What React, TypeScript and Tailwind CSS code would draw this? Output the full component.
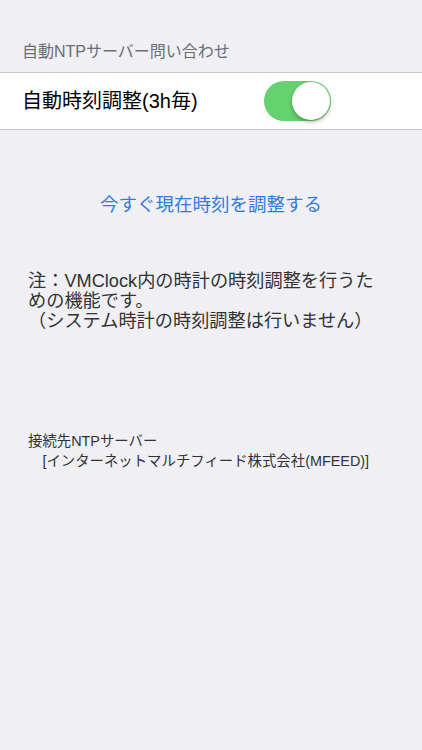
export default function App() {
  const font = { fontFamily: '"Liberation Sans", "Noto Sans CJK JP", sans-serif' }
  return (
    <div className="flex h-[750px] w-[422px] flex-col bg-[#efeff4] text-black" style={font}>
      {/* section header */}
      <div className="flex h-[72px] items-end px-[22px] pb-[10px]">
        <span className="text-[16px] leading-[20px] text-[#6d6d72]">自動NTPサーバー問い合わせ</span>
      </div>

      {/* toggle row */}
      <div className="flex h-[58px] items-center border-y border-[#c8c7cc] bg-white pl-[22px]">
        <span className="text-[20px] leading-[24px]">自動時刻調整(3h毎)</span>
        <div className="ml-auto mr-[91px] flex h-[40px] w-[67px] items-center justify-end rounded-full bg-[#65d16f] p-[1px]">
          <div className="h-[38px] w-[38px] rounded-full bg-white shadow-[0_2px_4px_rgba(0,0,0,0.3)]" />
        </div>
      </div>

      {/* action */}
      <div className="mt-[63px] text-center text-[18.5px] leading-[24px] text-[#2f7ddf]">
        今すぐ現在時刻を調整する
      </div>

      {/* note */}
      <div className="mt-[54px] px-[28px] text-[18.2px] leading-[20px] text-[#333333]">
        <div className="whitespace-nowrap">注：VMClock内の時計の時刻調整を行うた</div>
        <div className="whitespace-nowrap">めの機能です。</div>
        <div className="whitespace-nowrap">（システム時計の時刻調整は行いません）</div>
      </div>

      {/* server */}
      <div className="mt-[100px] px-[28px] text-[14.4px] leading-[20px] text-[#333333]">
        <div className="whitespace-nowrap">接続先NTPサーバー</div>
        <div className="whitespace-nowrap">　[インターネットマルチフィード株式会社(MFEED)]</div>
      </div>
    </div>
  )
}
